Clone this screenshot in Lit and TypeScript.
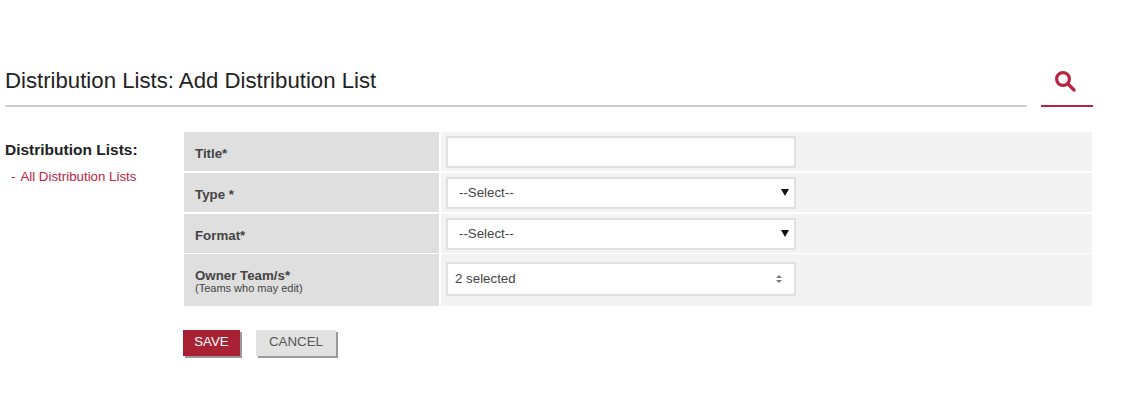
import { LitElement, html, css } from 'lit';
import { customElement } from 'lit/decorators.js';

const ROWS = [
  { label: 'Title*', kind: 'input' },
  { label: 'Type *', kind: 'select', value: '--Select--' },
  { label: 'Format*', kind: 'select', value: '--Select--' },
  { label: 'Owner Team/s*', note: '(Teams who may edit)', kind: 'multi', value: '2 selected' },
];

@customElement('app-root')
export class AppRoot extends LitElement {
  static styles = css`
    :host {
      display: block;
      width: 1132px;
      height: 406px;
      background: #fff;
      overflow: hidden;
      font-family: 'Liberation Sans', Arial, sans-serif;
      color: #222;
    }

    /* ── Header ───────────────────── */
    .header {
      display: flex;
      align-items: flex-end;
      gap: 14px;
      padding: 65px 39px 0 5px;
    }
    .title {
      flex: 1;
      height: 42px;
      box-sizing: border-box;
      margin: 0;
      font-size: 22.2px;
      font-weight: 400;
      line-height: 32px;
      border-bottom: 2px solid #ccc;
    }
    .search {
      width: 52px;
      height: 42px;
      box-sizing: border-box;
      display: flex;
      padding: 5px 0 0 13px;
      border-bottom: 2px solid #b9233f;
    }
    .search svg {
      display: block;
      width: 22px;
      height: 22px;
    }

    /* ── Body ─────────────────────── */
    .body {
      display: flex;
      padding: 25px 40px 0 5px;
    }
    .side {
      width: 179px;
      flex: none;
    }
    .side h2 {
      margin: 9px 0 0;
      font-size: 15.5px;
      line-height: 18px;
      font-weight: 700;
    }
    .side a {
      display: block;
      margin-top: 10px;
      padding-left: 6px;
      font-size: 13.3px;
      line-height: 16px;
      color: #b9233f;
      text-decoration: none;
    }
    .side a span {
      margin-right: 2px;
    }
    .main {
      flex: 1;
    }

    /* ── Form table ───────────────── */
    .row {
      display: grid;
      grid-template-columns: 255px 1fr;
      column-gap: 2px;
      margin-bottom: 2px;
    }
    .row.tall {
      margin-top: -1px;
      margin-bottom: 0;
    }
    .label {
      background: #dfdfdf;
      padding: 5px 11px 0;
      display: flex;
      flex-direction: column;
      justify-content: center;
      font-size: 13.3px;
      font-weight: 700;
      color: #444;
      height: 39px;
      box-sizing: border-box;
    }
    .label small {
      font-size: 11px;
      line-height: 10px;
      font-weight: 400;
    }
    .label strong {
      line-height: 14px;
    }
    .row.tall .label {
      height: 52px;
      padding-top: 2px;
    }
    .value {
      background: #f3f3f3;
      padding-left: 5px;
      display: flex;
      align-items: center;
    }
    .field {
      width: 350px;
      height: 32px;
      box-sizing: border-box;
      background: #fff;
      border: 2px solid #e0e0e0;
      display: flex;
      align-items: center;
      justify-content: space-between;
      padding: 0 5px 0 11px;
      font-size: 13.3px;
      color: #444;
    }
    .row.tall .value {
      align-items: flex-start;
    }
    .row.tall .field {
      height: 34px;
      margin-top: 8px;
      padding: 0 12px 0 7px;
    }
    .row.tall .field span:first-child {
      margin-top: -2px;
    }
    .caret {
      width: 0;
      height: 0;
      margin-top: -1px;
      border-left: 4px solid transparent;
      border-right: 4px solid transparent;
      border-top: 7px solid #111;
    }
    .updown {
      display: flex;
      flex-direction: column;
      gap: 2px;
    }
    .updown i {
      display: block;
      width: 0;
      height: 0;
      border-left: 3px solid transparent;
      border-right: 3px solid transparent;
    }
    .updown i:first-child {
      border-bottom: 3px solid #777;
    }
    .updown i:last-child {
      border-top: 3px solid #777;
    }

    /* ── Buttons ──────────────────── */
    .actions {
      display: flex;
      gap: 16px;
      margin-top: 24px;
      margin-left: -1px;
    }
    button {
      height: 26px;
      padding: 0 0 4px;
      border: 0;
      font: 400 13.3px 'Liberation Sans', Arial, sans-serif;
      box-shadow: 2px 2px 0 #999;
    }
    .save {
      width: 57px;
      background: #a82234;
      color: #fff;
    }
    .cancel {
      width: 80px;
      background: #e2e2e2;
      color: #555;
    }
  `;

  renderField(row: (typeof ROWS)[number]) {
    if (row.kind === 'input') return html`<div class="field"></div>`;
    return html`<div class="field">
      <span>${row.value}</span>
      ${row.kind === 'select'
        ? html`<span class="caret"></span>`
        : html`<span class="updown"><i></i><i></i></span>`}
    </div>`;
  }

  render() {
    return html`
      <div class="header">
        <h1 class="title">Distribution Lists: Add Distribution List</h1>
        <div class="search">
          <svg viewBox="0 0 22 22" fill="none" stroke="#b9233f" stroke-width="3.2">
            <circle cx="9" cy="9" r="6.4" />
            <path d="M14 14l6 6" stroke-linecap="round" />
          </svg>
        </div>
      </div>
      <div class="body">
        <div class="side">
          <h2>Distribution Lists:</h2>
          <a href="#"><span>-</span> All Distribution Lists</a>
        </div>
        <div class="main">
          ${ROWS.map(
            (row) => html`
              <div class="row ${row.note ? 'tall' : ''}">
                <div class="label">
                  <strong>${row.label}</strong>
                  ${row.note ? html`<small>${row.note}</small>` : ''}
                </div>
                <div class="value">${this.renderField(row)}</div>
              </div>
            `,
          )}
          <div class="actions">
            <button class="save">SAVE</button>
            <button class="cancel">CANCEL</button>
          </div>
        </div>
      </div>
    `;
  }
}
